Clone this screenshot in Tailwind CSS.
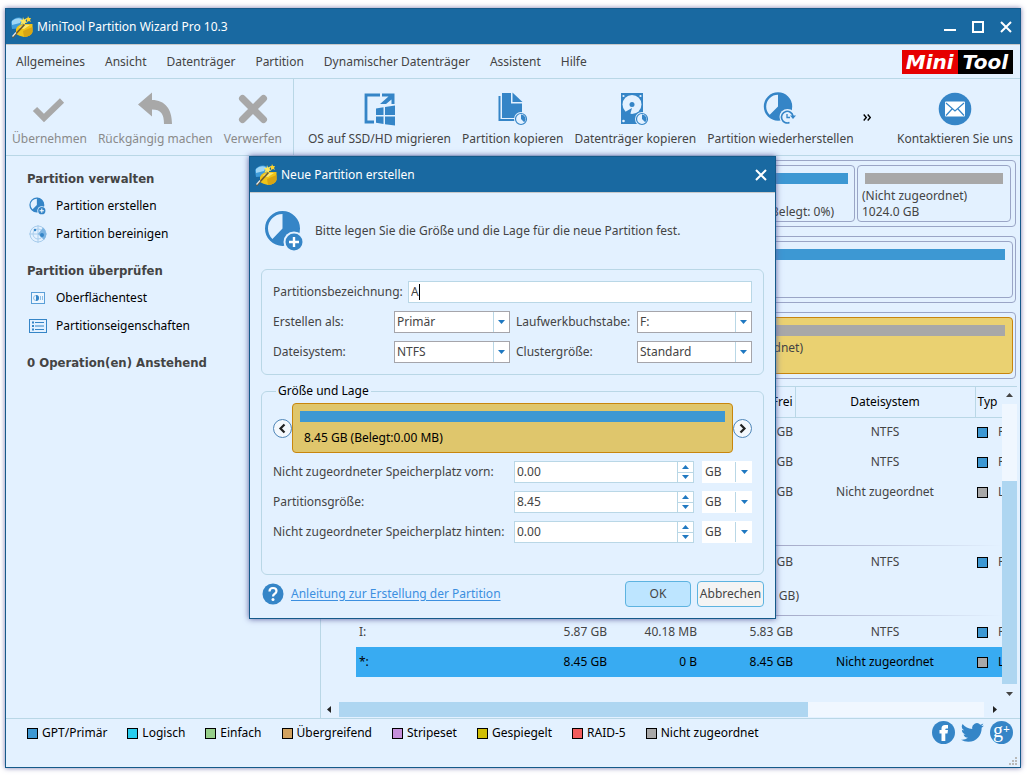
<!DOCTYPE html>
<html lang="de">
<head>
<meta charset="utf-8">
<meta name="viewport" content="width=device-width, initial-scale=1">
<title>MiniTool Partition Wizard Pro 10.3</title>
<script src="https://cdn.jsdelivr.net/npm/@tailwindcss/browser@4"></script>
</head>
<body class="bg-white font-['Noto_Sans','DejaVu_Sans_Condensed',sans-serif] text-xs text-[#444]">

<!-- Shared symbols -->
<svg class="hidden" aria-hidden="true">
  <symbol id="wizard" viewBox="0 0 22 22">
    <path d="M0 6 Q3 1 9 1.500 L14 4 L13 12 L1 13 Z" fill="#3f9ddb"/>
    <path d="M1 5 Q5 1 11 3 L9 7 L1 9 Z" fill="#9fd6f5"/>
    <path d="M5 13 Q7 8 14 8 L21.500 8 V16 Q20 20.500 13 21 Q8 20 5 18 Z" fill="#f0c419"/>
    <path d="M12 15 L21.500 11 V16 Q20 20.500 13 21 Z" fill="#d9a514"/>
    <path d="M8 12 Q11 8 19 9 L13 13 Z" fill="#fbe873"/>
    <path d="M12 1 l1 2.500 2.500 -1 -1 2.500 2 1.500 -2.500 .5 0 2.500 -2 -2 -2.500 1 1 -2.500 -1.500 -2 2.500 0Z" fill="#ffe75a"/>
    <path d="M17 0 l1 2 2 0 -1 2 1 2 -2 -1 -2 1 0 -2 -1.500 -1.500 2 -.5Z" fill="#ffd32e"/>
    <path d="M1.500 21.500 L13.500 8.500" stroke="#6b5a33" stroke-width="1.700"/>
    <path d="M1.500 20.500 L5 16.500" stroke="#e8e8e8" stroke-width="1.200"/>
  </symbol>
  <symbol id="pie-add" viewBox="0 0 38 42">
    <circle cx="17.500" cy="18.500" r="16" fill="none" stroke="#3585c7" stroke-width="3"/>
    <path d="M17.500 2 A16.500 16.500 0 1 1 6 30.500 L17.500 18.500 Z" fill="#3585c7"/>
    <circle cx="29" cy="32" r="10.500" fill="#e3f1ff"/>
    <circle cx="29" cy="32" r="8.500" fill="#3585c7"/>
    <path d="M29 27 V37 M24 32 H34" stroke="#fff" stroke-width="2.400"/>
  </symbol>
  <symbol id="pie-badge" viewBox="0 0 14 14">
    <circle cx="7" cy="7" r="7" fill="#e3f1ff"/>
    <circle cx="7" cy="7" r="5.500" fill="none" stroke="#3585c7" stroke-width="1.200"/>
    <path d="M7 7 V2.500 A4.500 4.500 0 0 1 10.200 10.200 Z" fill="#3585c7"/>
  </symbol>
  <symbol id="down" viewBox="0 0 7 4"><path d="M0 0 H7 L3.500 4 Z" fill="#1f78c1"/></symbol>
  <symbol id="up" viewBox="0 0 7 4"><path d="M0 4 H7 L3.500 0 Z" fill="#1f78c1"/></symbol>
</svg>

<div class="flex min-h-screen pt-2 pr-1.5 pb-2 pl-[5px]">
<div class="relative flex min-w-0 flex-1 flex-col border border-[#155a8a] bg-[#e3f1ff] shadow-[0_0_5px_#7c7cb0]">

  <!-- Title bar -->
  <header class="flex h-9 shrink-0 items-center border-b border-[#c9c9c9] bg-[#1969a1] pr-2 pl-[5px] text-white">
    <svg class="size-[22px]"><use href="#wizard"/></svg>
    <h1 class="ml-1 flex-1">MiniTool Partition Wizard Pro 10.3</h1>
    <div class="flex items-center gap-4">
      <button aria-label="Minimieren" class="block"><svg class="size-3" viewBox="0 0 12 12"><path d="M0 9 H12" stroke="#fff" stroke-width="2"/></svg></button>
      <button aria-label="Maximieren" class="block"><svg class="size-3" viewBox="0 0 12 12"><rect x="1" y="1" width="10" height="10" fill="none" stroke="#fff" stroke-width="2"/></svg></button>
      <button aria-label="Schließen" class="block"><svg class="size-3" viewBox="0 0 12 12"><path d="M1 1 L11 11 M11 1 L1 11" stroke="#fff" stroke-width="2"/></svg></button>
    </div>
  </header>

  <!-- Menu bar -->
  <nav class="flex h-[34px] shrink-0 items-center gap-5 border-b border-[#b9d7e6] pr-[7px] pl-[10px]">
    <button>Allgemeines</button>
    <button>Ansicht</button>
    <button>Datenträger</button>
    <button>Partition</button>
    <button>Dynamischer Datenträger</button>
    <button>Assistent</button>
    <button>Hilfe</button>
    <div class="ml-auto flex h-6 items-center bg-black font-['DejaVu_Sans',sans-serif] text-xl leading-6 font-bold text-white italic">
      <span class="bg-[#e60000] px-1">Mini</span><span class="px-[5px]">Tool</span>
    </div>
  </nav>

  <!-- Toolbar -->
  <div class="flex h-[77px] shrink-0 border-b border-[#b9d7e6] leading-4">
    <div class="flex gap-[11px] border-r border-[#b9d7e6] pr-[11px] pl-1.5 text-[#8a8a8a]">
      <button class="flex flex-col items-center pt-3">
        <svg class="h-9 w-9" viewBox="0 0 36 36"><path d="M4 18 L13 27 L31 9.500" fill="none" stroke="#a8a8a8" stroke-width="6"/></svg>
        <span class="mt-1">Übernehmen</span>
      </button>
      <button class="flex flex-col items-center pt-3">
        <svg class="h-9 w-9" viewBox="0 0 36 36"><path d="M1 13.500 L15 1.500 V9 C28 9 35 18 35 33 H27 C27 23 24 18.500 15 18.500 V25.500 Z" fill="#a8a8a8"/></svg>
        <span class="mt-1">Rückgängig machen</span>
      </button>
      <button class="flex flex-col items-center pt-3">
        <svg class="h-9 w-9" viewBox="0 0 36 36"><path d="M7.500 7.500 L28.500 28.500 M28.500 7.500 L7.500 28.500" stroke="#a8a8a8" stroke-width="7" stroke-linecap="round"/></svg>
        <span class="mt-1">Verwerfen</span>
      </button>
    </div>
    <div class="flex min-w-0 flex-1 gap-[11px] pr-[7px] pl-[14px]">
      <button class="flex flex-col items-center pt-3">
        <svg class="h-9 w-9" viewBox="0 0 36 36">
          <path d="M19 4 H5 V31 H13" fill="none" stroke="#3585c7" stroke-width="2.800"/>
          <path d="M21 2.500 H33.500 V13 H30.500 V8.500 L25 13 H19 L27.500 5.500 H21 Z" fill="#3585c7"/>
          <path d="M15 17.500 L22.500 16.200 V24 H15 Z M24 16 L34 14.500 V24 H24 Z M15 25.500 H22.500 V33 L15 31.800 Z M24 25.500 H34 V34.500 L24 33.200 Z" fill="#3585c7"/>
        </svg>
        <span class="mt-1">OS auf SSD/HD migrieren</span>
      </button>
      <button class="flex flex-col items-center pt-3">
        <svg class="h-9 w-9" viewBox="0 0 36 36">
          <path d="M4.500 5 V29 H20" fill="none" stroke="#3585c7" stroke-width="2"/>
          <path d="M7 2 H16 V12.500 H27 V27 H7 Z" fill="#3585c7"/><path d="M17.500 1.500 L27.500 11 H17.500 Z" fill="#3585c7"/>
          <use href="#pie-badge" x="19" y="21" width="14" height="14"/>
        </svg>
        <span class="mt-1">Partition kopieren</span>
      </button>
      <button class="flex flex-col items-center pt-3">
        <svg class="h-9 w-9" viewBox="0 0 36 36">
          <rect x="4" y="2" width="22" height="31" fill="#3585c7"/>
          <circle cx="15" cy="13.500" r="9.500" fill="#e3f1ff"/><circle cx="15" cy="13.500" r="2.500" fill="#3585c7"/>
          <path d="M8 21 L15 17 L13 24 Z" fill="#3585c7"/>
          <g fill="#e3f1ff"><circle cx="6.500" cy="5" r="1.100"/><circle cx="23.500" cy="5" r="1.100"/><circle cx="6.500" cy="30" r="1.300"/></g>
          <use href="#pie-badge" x="18" y="21" width="14" height="14"/>
        </svg>
        <span class="mt-1">Datenträger kopieren</span>
      </button>
      <button class="flex flex-col items-center pt-3">
        <svg class="h-9 w-9" viewBox="0 0 36 36">
          <circle cx="16" cy="15.500" r="13" fill="none" stroke="#3585c7" stroke-width="2.400"/>
          <path d="M16 2 A13.500 13.500 0 1 1 6.500 25 L16 15.500 Z" fill="#3585c7"/>
          <circle cx="25.500" cy="26" r="8" fill="#e3f1ff"/>
          <path d="M27.500 31.500 A5.800 5.800 0 1 1 31 25" fill="none" stroke="#3585c7" stroke-width="1.600"/>
          <path d="M28 24.500 H34 L31 28 Z" fill="#3585c7"/><path d="M25 23 V26.500 H28" fill="none" stroke="#3585c7" stroke-width="1.300"/>
        </svg>
        <span class="mt-1">Partition wiederherstellen</span>
      </button>
      <button aria-label="Weitere Aktionen" class="-ml-0.5"><svg class="h-[7px] w-2" viewBox="0 0 8 7"><path d="M.7 .5 L3.300 3.500 L.7 6.500 M4.700 .5 L7.300 3.500 L4.700 6.500" fill="none" stroke="#000" stroke-width="1.400"/></svg></button>
      <button class="ml-auto flex flex-col items-center pt-3">
        <svg class="h-9 w-9" viewBox="0 0 36 36"><circle cx="18" cy="18" r="16.300" fill="#3585c7"/><rect x="8" y="10.500" width="20" height="15" rx="1" fill="#fff"/><path d="M9 12 L18 20 L27 12 M9 24.500 L15 18 M27 24.500 L21 18" fill="none" stroke="#3585c7" stroke-width="1.200"/></svg>
        <span class="mt-1">Kontaktieren Sie uns</span>
      </button>
    </div>
  </div>

  <!-- Work area -->
  <div class="flex flex-1">
    <aside class="w-[315px] shrink-0 border-r border-[#b9d7e6] pt-[13px] pl-[21px] text-black">
      <h2 class="font-['DejaVu_Sans_Condensed',sans-serif] text-[13px] leading-5 font-bold text-[#444]">Partition verwalten</h2>
      <ul class="mt-[3px] mb-[13px]">
        <li><button class="flex h-7 items-center gap-2"><svg class="h-[18px] w-[21px]"><use href="#pie-add"/></svg>Partition erstellen</button></li>
        <li><button class="flex h-7 items-center gap-2">
          <svg class="h-[18px] w-[21px]" viewBox="0 0 21 18"><g fill="none" stroke="#a9cdec"><circle cx="11" cy="9" r="8"/><circle cx="11" cy="9" r="5"/><path d="M11 0 V18 M2 9 H20"/></g><path d="M11 9 L16 2.500 A8.500 8.500 0 0 1 17 15 Z" fill="#7db4e2"/><circle cx="8" cy="5" r="1.300" fill="#3585c7"/><circle cx="15" cy="10" r="2" fill="#3585c7"/></svg>Partition bereinigen</button></li>
      </ul>
      <h2 class="font-['DejaVu_Sans_Condensed',sans-serif] text-[13px] leading-5 font-bold text-[#444]">Partition überprüfen</h2>
      <ul class="mt-[3px] mb-[13px]">
        <li><button class="flex h-7 items-center gap-2">
          <svg class="h-[18px] w-[21px]" viewBox="0 0 21 18"><rect x="4.500" y="3.500" width="13" height="11" fill="#edf6ff" stroke="#5a9fd8"/><circle cx="9" cy="9" r="2.500" fill="none" stroke="#8fbfe6"/><path d="M9 9 V6 A3 3 0 0 1 9 12 Z" fill="#3585c7"/><path d="M13.500 7 V11 M15.500 7 V11" stroke="#8fbfe6"/></svg>Oberflächentest</button></li>
        <li><button class="flex h-7 items-center gap-2">
          <svg class="h-[18px] w-[21px]" viewBox="0 0 21 18"><rect x="2.500" y="2.500" width="17" height="13" fill="none" stroke="#3585c7"/><path d="M5 5.500 H7 M5 9 H7 M5 12.500 H7" stroke="#3585c7" stroke-width="2"/><path d="M8 5.500 H17 M8 9 H17 M8 12.500 H17" stroke="#3585c7"/></svg>Partitionseigenschaften</button></li>
      </ul>
      <h2 class="font-['DejaVu_Sans_Condensed',sans-serif] text-[13px] leading-5 font-bold text-[#444]">0 Operation(en) Anstehend</h2>
    </aside>

    <main class="flex min-w-0 flex-1 flex-col">
      <!-- Disk map -->
      <section class="flex flex-col gap-[9px] pt-1 pr-1 pl-1.5 leading-4">
        <div class="flex h-[67px] gap-0.5 rounded border border-[#9aa5c6] py-1 pr-1 pl-20">
          <div class="flex-1 rounded border border-[#9aa5c6] px-1 pt-[7px]">
            <div class="mr-0.5 h-[11px] bg-[#3d98d3]"></div>
            <p class="mt-5 mr-4 text-right">(Belegt: 0%)</p>
          </div>
          <div class="w-[154px] rounded border border-[#9aa5c6] px-1 pt-[7px]">
            <div class="mx-[3px] h-[11px] bg-[#a8a8a8]"></div>
            <p class="mt-1">(Nicht zugeordnet)<br>1024.0 GB</p>
          </div>
        </div>
        <div class="h-[67px] rounded border border-[#9aa5c6] py-1 pr-0.5 pl-20">
          <div class="h-full rounded border border-[#9aa5c6] px-[7px] pt-[7px]"><div class="h-[11px] bg-[#3d98d3]"></div></div>
        </div>
        <div class="h-[67px] rounded border border-[#9aa5c6] py-1 pr-0.5 pl-20">
          <div class="h-full rounded border border-[#c8860d] bg-[#ead171] px-[7px] pt-[7px]">
            <div class="h-[11px] bg-[#a8a8a8]"></div>
            <p class="mt-1 mr-[202px] text-right">(Nicht zugeordnet)</p>
          </div>
        </div>
      </section>

      <!-- Partition list -->
      <section class="mt-[7px] mr-[3px] flex flex-1 border-t border-[#b9d7e6]">
        <div class="min-w-0 flex-1 overflow-hidden pl-[35px]">
          <table class="w-full table-fixed whitespace-nowrap">
            <colgroup><col><col class="w-[110px]"><col class="w-[90px]"><col class="w-[96px]"><col class="w-[180px]"><col class="w-[27px]"></colgroup>
            <thead class="text-black">
              <tr class="h-[30px] border-b border-[#b9d7e6]">
                <th></th><th></th><th></th>
                <th class="border-r border-[#b9d7e6] pr-0.5 text-right font-normal">Frei</th>
                <th class="border-r border-[#b9d7e6] text-center font-normal">Dateisystem</th>
                <th class="pl-0.5 text-left font-normal">Typ</th>
              </tr>
            </thead>
            <tbody>
              <tr class="h-[30px]"><td></td><td></td><td></td><td class="pr-0.5 text-right">GB</td><td class="text-center">NTFS</td><td class="overflow-hidden pl-0.5"><div class="flex items-center gap-2.5"><span class="size-[11px] shrink-0 border border-black bg-[#3d98d3]"></span>P</div></td></tr>
              <tr class="h-[30px]"><td></td><td></td><td></td><td class="pr-0.5 text-right">GB</td><td class="text-center">NTFS</td><td class="overflow-hidden pl-0.5"><div class="flex items-center gap-2.5"><span class="size-[11px] shrink-0 border border-black bg-[#3d98d3]"></span>P</div></td></tr>
              <tr class="h-[30px]"><td></td><td></td><td></td><td class="pr-0.5 text-right">GB</td><td class="text-center">Nicht zugeordnet</td><td class="overflow-hidden pl-0.5"><div class="flex items-center gap-2.5"><span class="size-[11px] shrink-0 border border-black bg-[#a8a8a8]"></span>L</div></td></tr>
              <tr class="h-[38px]"><td colspan="6"></td></tr>
              <tr class="h-0.5"><td colspan="6"><div class="mb-px h-px bg-linear-to-r from-[#9b9fc0] from-60% to-[#e3f1ff]"></div></td></tr>
              <tr class="h-[30px]"><td></td><td></td><td></td><td class="pr-0.5 text-right">GB</td><td class="text-center">NTFS</td><td class="overflow-hidden pl-0.5"><div class="flex items-center gap-2.5"><span class="size-[11px] shrink-0 border border-black bg-[#3d98d3]"></span>P</div></td></tr>
              <tr class="h-[38px]"><td colspan="6" class="pr-[203px] text-right">GB)</td></tr>
              <tr class="h-0.5"><td colspan="6"><div class="mb-px h-px bg-linear-to-r from-[#9b9fc0] from-60% to-[#e3f1ff]"></div></td></tr>
              <tr class="h-[30px]"><td class="pl-[3px]">I:</td><td class="pr-0.5 text-right">5.87 GB</td><td class="pr-0.5 text-right">40.18 MB</td><td class="pr-0.5 text-right">5.83 GB</td><td class="text-center">NTFS</td><td class="overflow-hidden pl-0.5"><div class="flex items-center gap-2.5"><span class="size-[11px] shrink-0 border border-black bg-[#3d98d3]"></span>P</div></td></tr>
              <tr class="h-[30px] bg-[#38abf2] text-black"><td class="pl-[3px]">*:</td><td class="pr-0.5 text-right">8.45 GB</td><td class="pr-0.5 text-right">0 B</td><td class="pr-0.5 text-right">8.45 GB</td><td class="text-center">Nicht zugeordnet</td><td class="overflow-hidden pl-0.5"><div class="flex items-center gap-2.5"><span class="size-[11px] shrink-0 border border-black bg-[#a8a8a8]"></span>L</div></td></tr>
            </tbody>
          </table>
        </div>
        <!-- Vertical scrollbar -->
        <div class="flex w-[15px] flex-col items-center">
          <svg class="h-[17px] w-[7px]" viewBox="0 0 7 17"><path d="M0 10 H7 L3.500 6 Z" fill="#444"/></svg>
          <div class="h-[77px] w-full bg-[#f0f7ff]"></div>
          <div class="w-full flex-1 bg-[#aed6f1]"></div>
          <svg class="h-[18px] w-[7px]" viewBox="0 0 7 18"><path d="M0 8 H7 L3.500 12 Z" fill="#444"/></svg>
        </div>
      </section>
      <!-- Horizontal scrollbar -->
      <div class="mr-[3px] flex h-4 items-center pb-px">
        <svg class="h-[7px] w-[18px]" viewBox="0 0 18 7"><path d="M10 0 V7 L6 3.500 Z" fill="#222"/></svg>
        <div class="h-full flex-[8] bg-[#aed6f1]"></div>
        <div class="h-full flex-[3] bg-[#f0f7ff]"></div>
        <svg class="h-[7px] w-[33px]" viewBox="0 0 33 7"><path d="M9 0 V7 L13 3.500 Z" fill="#222"/></svg>
      </div>
    </main>
  </div>

  <!-- Legend -->
  <footer class="relative flex h-[49px] shrink-0 items-start border-t border-[#b9d7e6] pr-[7px] pl-[21px] text-black">
    <ul class="flex h-7 items-center gap-5">
      <li class="flex items-center gap-1"><span class="size-[11px] border border-black bg-[#3d98d3]"></span>GPT/Primär</li>
      <li class="flex items-center gap-1"><span class="size-[11px] border border-black bg-[#29cdee]"></span>Logisch</li>
      <li class="flex items-center gap-1"><span class="size-[11px] border border-black bg-[#97cf8a]"></span>Einfach</li>
      <li class="flex items-center gap-1"><span class="size-[11px] border border-black bg-[#d2a25f]"></span>Übergreifend</li>
      <li class="flex items-center gap-1"><span class="size-[11px] border border-black bg-[#c690dc]"></span>Stripeset</li>
      <li class="flex items-center gap-1"><span class="size-[11px] border border-black bg-[#d0be06]"></span>Gespiegelt</li>
      <li class="flex items-center gap-1"><span class="size-[11px] border border-black bg-[#f25c5c]"></span>RAID-5</li>
      <li class="flex items-center gap-1"><span class="size-[11px] border border-black bg-[#a8a8a8]"></span>Nicht zugeordnet</li>
    </ul>
    <div class="ml-auto flex gap-1.5 pt-0.5">
      <a href="#" aria-label="Facebook"><svg class="size-[23px]" viewBox="0 0 23 23"><circle cx="11.500" cy="11.500" r="11.500" fill="#3585c7"/><path d="M9.500 20 V12.500 H7.500 V9 H9.500 V7.500 Q9.500 4 13 4 H16 V7.500 H14.500 Q13.300 7.500 13.300 8.500 V9 H16 L15.500 12.500 H13.300 V20 Z" fill="#fff"/></svg></a>
      <a href="#" aria-label="Twitter"><svg class="size-[23px]" viewBox="0 0 24 24"><path d="M23.950 4.570a10 10 0 0 1-2.820.77 4.960 4.960 0 0 0 2.160-2.720c-.95.560-2.010.960-3.130 1.180a4.920 4.920 0 0 0-8.390 4.480C7.690 8.090 4.070 6.130 1.640 3.160a4.920 4.920 0 0 0 1.520 6.570 4.900 4.900 0 0 1-2.230-.61v.06a4.920 4.920 0 0 0 3.950 4.830 5 5 0 0 1-2.210.08 4.940 4.940 0 0 0 4.600 3.420A9.870 9.870 0 0 1 0 19.540a14 14 0 0 0 7.550 2.210c9.050 0 14-7.500 14-13.980l-.02-.64a10 10 0 0 0 2.420-2.560z" fill="#3585c7"/></svg></a>
      <a href="#" aria-label="Google Plus" class="flex size-[23px] items-start justify-center rounded-full bg-[#3585c7] font-['Liberation_Serif',serif] text-xl leading-[18px] text-white">g<span class="text-xs leading-4 font-bold">+</span></a>
    </div>
    <svg class="absolute right-[3px] bottom-0.5 size-2" viewBox="0 0 8 8"><path d="M6 0h2v2h-2z M3 3h2v2h-2z M6 3h2v2h-2z M0 6h2v2h-2z M3 6h2v2h-2z M6 6h2v2h-2z" fill="#b9b9b9"/></svg>
  </footer>

  <!-- New partition dialog -->
  <div role="dialog" aria-labelledby="dlg-title" class="absolute top-[147px] left-[243px] flex w-[527px] flex-col border border-[#155a8a] bg-[#e3f1ff] pb-[11px] shadow-[0_0_6px_#5b5f9e]">
    <header class="flex h-9 items-center border-b border-[#c9c9c9] bg-[#1969a1] pr-2 pl-[5px] text-white">
      <svg class="size-[22px]"><use href="#wizard"/></svg>
      <h2 id="dlg-title" class="ml-1 flex-1">Neue Partition erstellen</h2>
      <button aria-label="Schließen" class="block"><svg class="size-3" viewBox="0 0 12 12"><path d="M1 1 L11 11 M11 1 L1 11" stroke="#fff" stroke-width="2"/></svg></button>
    </header>

    <div class="flex h-[76px] items-center gap-3 pl-[15px]">
      <svg class="h-[42px] w-[38px]"><use href="#pie-add"/></svg>
      <p>Bitte legen Sie die Größe und die Lage für die neue Partition fest.</p>
    </div>

    <form class="px-[11px]">
      <div class="flex flex-col gap-2 rounded-md border border-[#b9d7e6] px-[11px] py-[11px]">
        <div class="flex h-[22px] items-center">
          <label for="name" class="w-[135px]">Partitionsbezeichnung:</label>
          <div class="flex h-full flex-1 items-center border border-[#b9d7e6] bg-white pl-0.5">
            <input id="name" value="A" class="field-sizing-content outline-none"><span class="h-4 w-px bg-black"></span>
          </div>
        </div>
        <div class="flex h-[22px] items-center">
          <label for="kind" class="w-[121px]">Erstellen als:</label>
          <div class="relative h-full w-[116px]">
            <select id="kind" class="h-full w-full appearance-none border border-[#a5a5ab] bg-white pl-0.5"><option>Primär</option></select>
            <span class="pointer-events-none absolute inset-y-px right-px flex w-4 items-center justify-center border-l border-[#b9d7e6]"><svg class="h-1 w-[7px]"><use href="#down"/></svg></span>
          </div>
          <label for="letter" class="ml-1.5 w-[121px]">Laufwerkbuchstabe:</label>
          <div class="relative h-full flex-1">
            <select id="letter" class="h-full w-full appearance-none border border-[#a5a5ab] bg-white pl-0.5"><option>F:</option></select>
            <span class="pointer-events-none absolute inset-y-px right-px flex w-4 items-center justify-center border-l border-[#b9d7e6]"><svg class="h-1 w-[7px]"><use href="#down"/></svg></span>
          </div>
        </div>
        <div class="flex h-[22px] items-center">
          <label for="fs" class="w-[121px]">Dateisystem:</label>
          <div class="relative h-full w-[116px]">
            <select id="fs" class="h-full w-full appearance-none border border-[#a5a5ab] bg-white pl-0.5"><option>NTFS</option></select>
            <span class="pointer-events-none absolute inset-y-px right-px flex w-4 items-center justify-center border-l border-[#b9d7e6]"><svg class="h-1 w-[7px]"><use href="#down"/></svg></span>
          </div>
          <label for="cluster" class="ml-1.5 w-[121px]">Clustergröße:</label>
          <div class="relative h-full flex-1">
            <select id="cluster" class="h-full w-full appearance-none border border-[#a5a5ab] bg-white pl-0.5"><option>Standard</option></select>
            <span class="pointer-events-none absolute inset-y-px right-px flex w-4 items-center justify-center border-l border-[#b9d7e6]"><svg class="h-1 w-[7px]"><use href="#down"/></svg></span>
          </div>
        </div>
      </div>

      <fieldset class="mt-2 rounded-md border border-[#b9d7e6] px-[11px] pb-[31px]">
        <legend class="ml-[3px] px-0.5 leading-4 text-black">Größe und Lage</legend>
        <div class="mt-1 flex items-center">
          <button type="button" aria-label="Nach links" class="block size-[19px] rounded-full border border-[#4f86b8] bg-[#f3f8fd]"><svg class="size-full" viewBox="0 0 17 17"><path d="M10.500 4.500 L6.500 8.500 L10.500 12.500" fill="none" stroke="#222" stroke-width="2.200"/></svg></button>
          <div class="h-[50px] flex-1 rounded-sm border border-[#c8860d] bg-[#dfc66c] px-[7px] pt-[7px] text-black">
            <div class="h-[11px] bg-[#3d98d3]"></div>
            <p class="mt-2 ml-1 leading-4">8.45 GB (Belegt:0.00 MB)</p>
          </div>
          <button type="button" aria-label="Nach rechts" class="block size-[19px] rounded-full border border-[#4f86b8] bg-[#f3f8fd]"><svg class="size-full" viewBox="0 0 17 17"><path d="M6.500 4.500 L10.500 8.500 L6.500 12.500" fill="none" stroke="#222" stroke-width="2.200"/></svg></button>
        </div>

        <div class="mt-2 flex flex-col gap-2">
          <div class="flex h-[22px] items-center">
            <label for="before" class="w-[241px]">Nicht zugeordneter Speicherplatz vorn:</label>
            <div class="flex h-full w-[180px] border border-[#b9d7e6] bg-white">
              <input id="before" value="0.00" class="min-w-0 flex-1 pl-0.5 outline-none">
              <div class="flex w-4 flex-col divide-y divide-[#b9d7e6] border-l border-[#b9d7e6]">
                <button type="button" aria-label="Mehr" class="flex flex-1 items-center justify-center"><svg class="h-1 w-[7px]"><use href="#up"/></svg></button>
                <button type="button" aria-label="Weniger" class="flex flex-1 items-center justify-center"><svg class="h-1 w-[7px]"><use href="#down"/></svg></button>
              </div>
            </div>
            <div class="relative ml-2 h-full flex-1">
              <select aria-label="Einheit vorn" class="h-full w-full appearance-none bg-white pl-[3px]"><option>GB</option></select>
              <span class="pointer-events-none absolute inset-y-px right-0 flex w-[17px] items-center justify-center border-l border-[#b9d7e6]"><svg class="h-1 w-[7px]"><use href="#down"/></svg></span>
            </div>
          </div>
          <div class="flex h-[22px] items-center">
            <label for="size" class="w-[241px]">Partitionsgröße:</label>
            <div class="flex h-full w-[180px] border border-[#b9d7e6] bg-white">
              <input id="size" value="8.45" class="min-w-0 flex-1 pl-0.5 outline-none">
              <div class="flex w-4 flex-col divide-y divide-[#b9d7e6] border-l border-[#b9d7e6]">
                <button type="button" aria-label="Mehr" class="flex flex-1 items-center justify-center"><svg class="h-1 w-[7px]"><use href="#up"/></svg></button>
                <button type="button" aria-label="Weniger" class="flex flex-1 items-center justify-center"><svg class="h-1 w-[7px]"><use href="#down"/></svg></button>
              </div>
            </div>
            <div class="relative ml-2 h-full flex-1">
              <select aria-label="Einheit der Größe" class="h-full w-full appearance-none bg-white pl-[3px]"><option>GB</option></select>
              <span class="pointer-events-none absolute inset-y-px right-0 flex w-[17px] items-center justify-center border-l border-[#b9d7e6]"><svg class="h-1 w-[7px]"><use href="#down"/></svg></span>
            </div>
          </div>
          <div class="flex h-[22px] items-center">
            <label for="after" class="w-[241px] whitespace-nowrap">Nicht zugeordneter Speicherplatz hinten:</label>
            <div class="flex h-full w-[180px] border border-[#b9d7e6] bg-white">
              <input id="after" value="0.00" class="min-w-0 flex-1 pl-0.5 outline-none">
              <div class="flex w-4 flex-col divide-y divide-[#b9d7e6] border-l border-[#b9d7e6]">
                <button type="button" aria-label="Mehr" class="flex flex-1 items-center justify-center"><svg class="h-1 w-[7px]"><use href="#up"/></svg></button>
                <button type="button" aria-label="Weniger" class="flex flex-1 items-center justify-center"><svg class="h-1 w-[7px]"><use href="#down"/></svg></button>
              </div>
            </div>
            <div class="relative ml-2 h-full flex-1">
              <select aria-label="Einheit hinten" class="h-full w-full appearance-none bg-white pl-[3px]"><option>GB</option></select>
              <span class="pointer-events-none absolute inset-y-px right-0 flex w-[17px] items-center justify-center border-l border-[#b9d7e6]"><svg class="h-1 w-[7px]"><use href="#down"/></svg></span>
            </div>
          </div>
        </div>
      </fieldset>

      <div class="mt-1.5 flex items-center pl-px">
        <svg class="size-[22px]" viewBox="0 0 22 22"><circle cx="11" cy="11" r="10.500" fill="#3585c7"/><path d="M7.500 8.500 Q7.500 5 11 5 Q14.500 5 14.500 8 Q14.500 9.800 12.500 11 Q11 12 11 13.500" fill="none" stroke="#fff" stroke-width="2.200"/><circle cx="11" cy="16.500" r="1.500" fill="#fff"/></svg>
        <div class="ml-[7px] flex-1"><a href="#" class="text-[#3c8fe0] underline underline-offset-2">Anleitung zur Erstellung der Partition</a></div>
        <button type="button" class="h-[26px] w-[66px] rounded-sm border border-[#5db3e0] bg-[#bde5ff]">OK</button>
        <button type="button" class="ml-1.5 h-[26px] w-[67px] rounded-sm border border-[#5db3e0] bg-[#f4f4f4]">Abbrechen</button>
      </div>
    </form>
  </div>
</div>
</div>
</body>
</html>
